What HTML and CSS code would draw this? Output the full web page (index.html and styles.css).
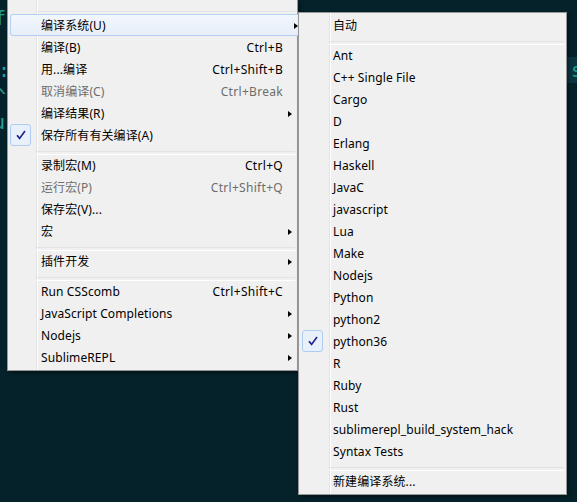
FILE: index.html
```html
<!DOCTYPE html>
<html lang="zh-CN">
<head>
<meta charset="utf-8">
<title>Tools menu</title>
<link rel="stylesheet" href="styles.css">
</head>
<body>
<div class="screen">
  <div class="editor">
    <div class="line"><span class="code c1">f</span></div>
    <div class="line"></div>
    <div class="line"><span class="code c3">:</span><span class="word">s</span></div>
    <div class="line"><span class="code c4">^</span></div>
    <div class="line"><span class="code c5">u</span></div>
  </div>

  <div class="menu menu-main">
    <div class="menu-top"></div>
    <div class="sep"></div>
    <div class="item hover"><span class="mark"></span><span class="label">编译系统(U)</span><span class="key"></span><span class="arrow-cell"><i class="arrow"></i></span></div>
    <div class="item"><span class="mark"></span><span class="label">编译(B)</span><span class="key">Ctrl+B</span><span class="arrow-cell"></span></div>
    <div class="item"><span class="mark"></span><span class="label">用...编译</span><span class="key">Ctrl+Shift+B</span><span class="arrow-cell"></span></div>
    <div class="item disabled"><span class="mark"></span><span class="label">取消编译(C)</span><span class="key">Ctrl+Break</span><span class="arrow-cell"></span></div>
    <div class="item"><span class="mark"></span><span class="label">编译结果(R)</span><span class="key"></span><span class="arrow-cell"><i class="arrow"></i></span></div>
    <div class="item"><span class="mark checked"><svg width="10" height="10" viewBox="0 0 10 10"><path d="M1 5.2 L3.6 8.4 L9 1" fill="none" stroke="#1f2789" stroke-width="1.7" stroke-linejoin="miter"/></svg></span><span class="label">保存所有有关编译(A)</span><span class="key"></span><span class="arrow-cell"></span></div>
    <div class="sep"></div>
    <div class="item"><span class="mark"></span><span class="label">录制宏(M)</span><span class="key">Ctrl+Q</span><span class="arrow-cell"></span></div>
    <div class="item disabled"><span class="mark"></span><span class="label">运行宏(P)</span><span class="key">Ctrl+Shift+Q</span><span class="arrow-cell"></span></div>
    <div class="item"><span class="mark"></span><span class="label">保存宏(V)...</span><span class="key"></span><span class="arrow-cell"></span></div>
    <div class="item"><span class="mark"></span><span class="label">宏</span><span class="key"></span><span class="arrow-cell"><i class="arrow"></i></span></div>
    <div class="sep"></div>
    <div class="item"><span class="mark"></span><span class="label">插件开发</span><span class="key"></span><span class="arrow-cell"><i class="arrow"></i></span></div>
    <div class="sep"></div>
    <div class="item"><span class="mark"></span><span class="label">Run CSScomb</span><span class="key">Ctrl+Shift+C</span><span class="arrow-cell"></span></div>
    <div class="item"><span class="mark"></span><span class="label">JavaScript Completions</span><span class="key"></span><span class="arrow-cell"><i class="arrow"></i></span></div>
    <div class="item"><span class="mark"></span><span class="label">Nodejs</span><span class="key"></span><span class="arrow-cell"><i class="arrow"></i></span></div>
    <div class="item"><span class="mark"></span><span class="label">SublimeREPL</span><span class="key"></span><span class="arrow-cell"><i class="arrow"></i></span></div>
  </div>

  <div class="menu menu-sub">
    <div class="item"><span class="mark"></span><span class="label">自动</span></div>
    <div class="sep"></div>
    <div class="item"><span class="mark"></span><span class="label">Ant</span></div>
    <div class="item"><span class="mark"></span><span class="label">C++ Single File</span></div>
    <div class="item"><span class="mark"></span><span class="label">Cargo</span></div>
    <div class="item"><span class="mark"></span><span class="label">D</span></div>
    <div class="item"><span class="mark"></span><span class="label">Erlang</span></div>
    <div class="item"><span class="mark"></span><span class="label">Haskell</span></div>
    <div class="item"><span class="mark"></span><span class="label">JavaC</span></div>
    <div class="item"><span class="mark"></span><span class="label">javascript</span></div>
    <div class="item"><span class="mark"></span><span class="label">Lua</span></div>
    <div class="item"><span class="mark"></span><span class="label">Make</span></div>
    <div class="item"><span class="mark"></span><span class="label">Nodejs</span></div>
    <div class="item"><span class="mark"></span><span class="label">Python</span></div>
    <div class="item"><span class="mark"></span><span class="label">python2</span></div>
    <div class="item"><span class="mark checked"><svg width="10" height="10" viewBox="0 0 10 10"><path d="M1 5.2 L3.6 8.4 L9 1" fill="none" stroke="#1f2789" stroke-width="1.7" stroke-linejoin="miter"/></svg></span><span class="label">python36</span></div>
    <div class="item"><span class="mark"></span><span class="label">R</span></div>
    <div class="item"><span class="mark"></span><span class="label">Ruby</span></div>
    <div class="item"><span class="mark"></span><span class="label">Rust</span></div>
    <div class="item"><span class="mark"></span><span class="label">sublimerepl_build_system_hack</span></div>
    <div class="item"><span class="mark"></span><span class="label">Syntax Tests</span></div>
    <div class="sep"></div>
    <div class="item"><span class="mark"></span><span class="label">新建编译系统...</span></div>
  </div>
</div>
</body>
</html>
```

FILE: styles.css
```css
* { box-sizing: border-box; }

html, body {
  margin: 0;
  padding: 0;
}

body {
  width: 577px;
  height: 502px;
  overflow: hidden;
  background: #05212a;
  font-family: "Noto Sans", "Noto Sans CJK SC", sans-serif;
  font-size: 12px;
  color: #000;
}

.screen {
  position: relative;
  width: 577px;
  height: 502px;
  overflow: hidden;
  background: #05212a;
}

/* editor text peeking out behind the menus */
.editor {
  padding-top: 5px;
  font-family: "DejaVu Sans Mono", monospace;
  font-size: 20px;
  color: #23a08f;
}

.line {
  height: 26px;
  line-height: 26px;
  display: flex;
  justify-content: space-between;
  white-space: pre;
}

.code { margin-left: -6px; }
.c3 { margin-left: -2px; }
.c4 { margin-left: -6px; }
.c5 { margin-left: -7px; }

.word {
  flex: none;
  margin-right: -6px;
  padding-left: 9px;
  background: #0b3540;
}

/* menus */
.menu {
  position: absolute;
  border: 1px solid #979797;
  box-shadow: 2px 2px 3px rgba(0, 0, 0, 0.35);
}

.menu-main {
  left: 7px;
  top: 0;
  width: 291px;
  border-top: none;
  padding: 0 2px 2px 2px;
  background:
    linear-gradient(#e2e3e3, #e2e3e3) no-repeat 28px 0 / 1px 100%,
    linear-gradient(#ffffff, #ffffff) no-repeat 29px 0 / 1px 100%,
    #f0f0f0;
}

.menu-sub {
  left: 298px;
  top: 12px;
  width: 269px;
  padding: 1px 3px 2px 3px;
  background:
    linear-gradient(#e2e3e3, #e2e3e3) no-repeat 30px 0 / 1px 100%,
    linear-gradient(#ffffff, #ffffff) no-repeat 31px 0 / 1px 100%,
    #f0f0f0;
}

.menu-top { height: 6px; }

.sep {
  height: 8px;
  padding-top: 5px;
  margin-left: 26px;
}

.sep::before {
  content: "";
  display: block;
  height: 2px;
  border-top: 1px solid #e2e3e3;
  border-bottom: 1px solid #ffffff;
}

.menu-sub .sep {
  margin-left: 27px;
  margin-right: -1px;
}

.item {
  height: 22px;
  display: flex;
  align-items: flex-start;
  white-space: nowrap;
}

.item.hover {
  border-radius: 3px;
  margin-right: -6px;
  background: linear-gradient(#f3f7fd, #e6eefa);
  box-shadow: inset 0 0 0 1px #b3cff1;
}

.item.disabled { color: #6d6d6d; }

.mark {
  flex: none;
  width: 21px;
  height: 22px;
  display: flex;
  align-items: center;
  justify-content: center;
}

.mark.checked {
  border: 1px solid #aecbf0;
  border-radius: 3px;
  background: #e8f0fb;
}

.label {
  flex: 1;
  margin-left: 10px;
  line-height: 24px;
  letter-spacing: 0.1px;
}

.key {
  flex: none;
  line-height: 24px;
  letter-spacing: 0.3px;
}

.arrow-cell {
  flex: none;
  width: 12px;
  height: 24px;
  display: flex;
  align-items: center;
}

.arrow {
  margin-left: 5px;
  width: 0;
  height: 0;
  border-left: 4px solid #000;
  border-top: 3.5px solid transparent;
  border-bottom: 3.5px solid transparent;
}
```
